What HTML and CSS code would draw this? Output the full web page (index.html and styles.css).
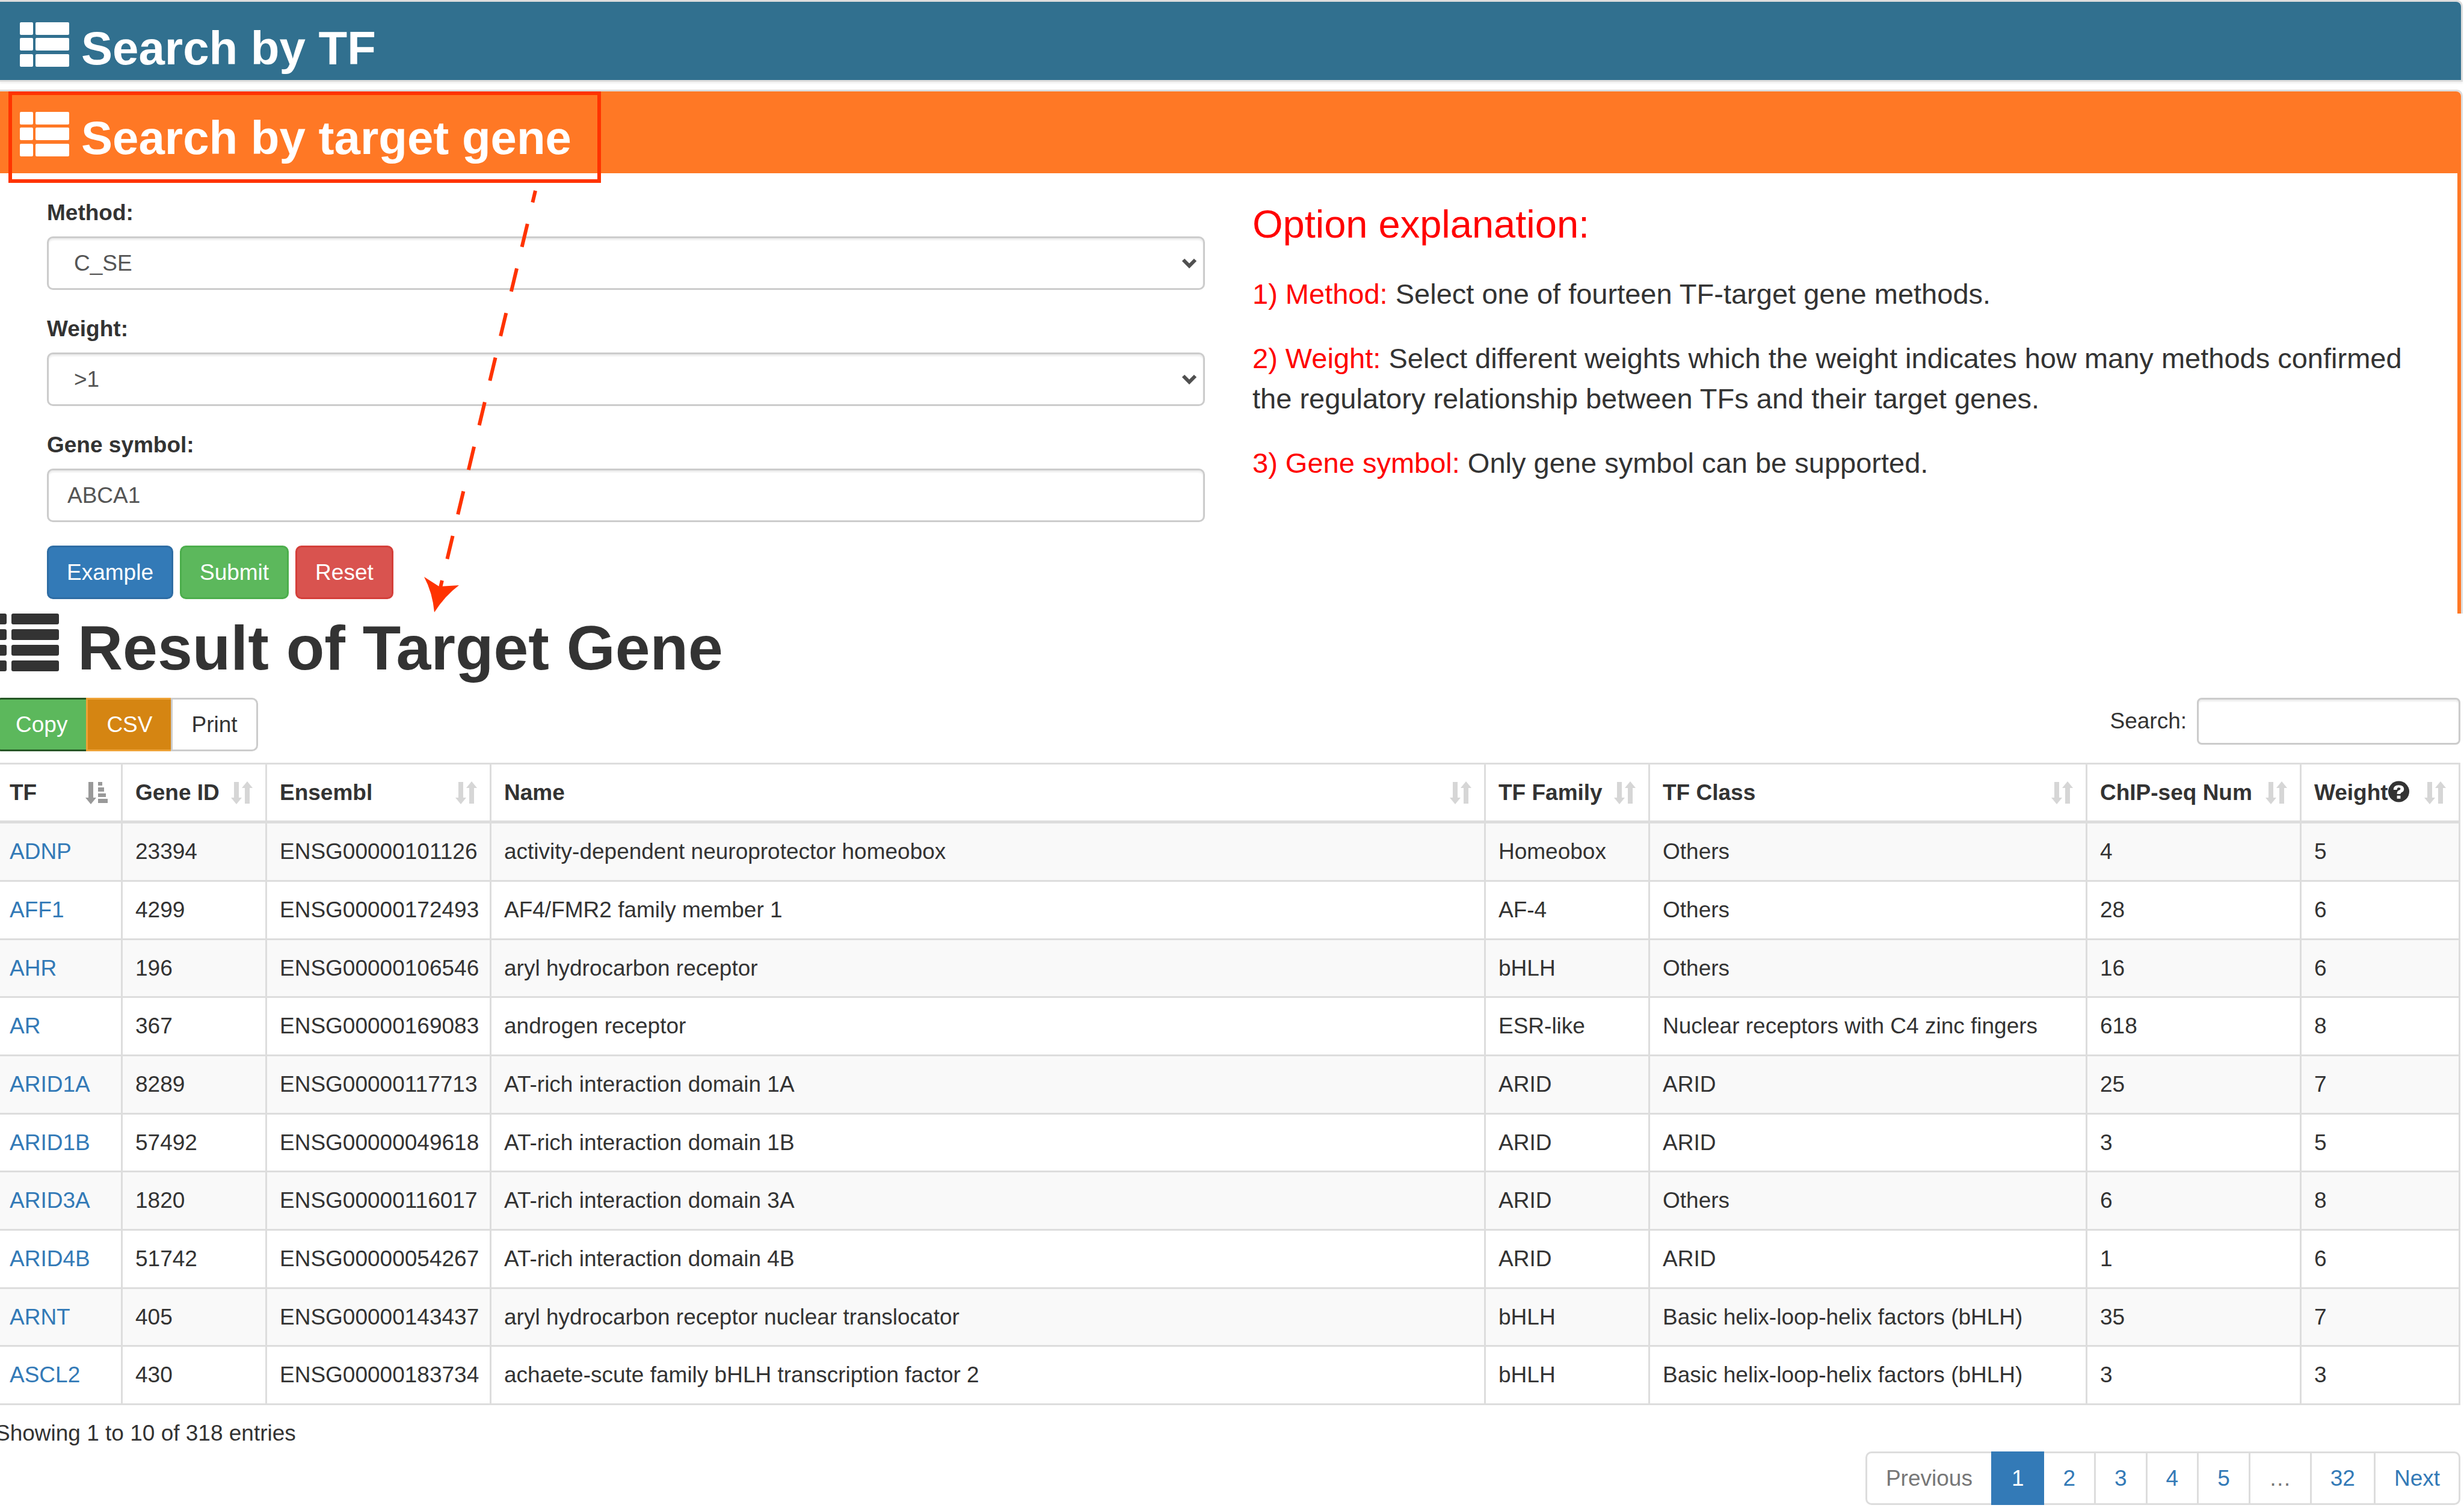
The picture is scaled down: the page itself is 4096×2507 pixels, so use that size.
FILE: index.html
```html
<!DOCTYPE html>
<html lang="en">
<head>
<meta charset="utf-8">
<title>Search by target gene</title>
<link rel="stylesheet" href="styles.css">
</head>
<body>
<svg class="symbols" aria-hidden="true">
  <symbol id="th-list" viewBox="0 0 82 74"><path d="M2 0H20q2 0 2 2V19q0 2-2 2H2q-2 0-2-2V2q0-2 2-2zM28 0H80q2 0 2 2V19q0 2-2 2H28q-2 0-2-2V2q0-2 2-2zM2 26H20q2 0 2 2V45q0 2-2 2H2q-2 0-2-2V28q0-2 2-2zM28 26H80q2 0 2 2V45q0 2-2 2H28q-2 0-2-2V28q0-2 2-2zM2 53H20q2 0 2 2V72q0 2-2 2H2q-2 0-2-2V55q0-2 2-2zM28 53H80q2 0 2 2V72q0 2-2 2H28q-2 0-2-2V55q0-2 2-2z"/></symbol>
  <symbol id="sort" viewBox="0 0 36 40"><path d="M5 2h8v26h5L9 39 0 28h5zM23 38h8V12h5L27 1l-9 11h5z"/></symbol>
  <symbol id="sort-asc" viewBox="0 0 38 40"><path d="M5 2h8v26h5L9 39 0 28h5zM21 2h7v6h-7zM21 11h10v7H21zM21 21h13v6H21zM21 30h16v7H21z"/></symbol>
  <symbol id="chevron" viewBox="0 0 26 18"><path d="M3 3l10 10L23 3" fill="none" stroke="#505050" stroke-width="6"/></symbol>
</svg>

<main class="page">
  <section class="panel">
    <h2 class="panel-title panel-title-blue"><svg class="title-icon"><use href="#th-list"/></svg>Search by TF</h2>
  </section>

  <section class="panel">
    <h2 class="panel-title panel-title-orange"><svg class="title-icon"><use href="#th-list"/></svg>Search by target gene</h2>
    <div class="panel-body">
      <form class="search-form">
        <div class="field">
          <label for="method">Method:</label>
          <div class="select-wrap">
            <select id="method" class="control control-select"><option>C_SE</option></select>
            <svg class="chevron"><use href="#chevron"/></svg>
          </div>
        </div>
        <div class="field">
          <label for="weight">Weight:</label>
          <div class="select-wrap">
            <select id="weight" class="control control-select"><option>&gt;1</option></select>
            <svg class="chevron"><use href="#chevron"/></svg>
          </div>
        </div>
        <div class="field">
          <label for="symbol">Gene symbol:</label>
          <input id="symbol" class="control" type="text" value="ABCA1">
        </div>
        <div class="actions">
          <button type="button" class="btn btn-primary">Example</button>
          <button type="button" class="btn btn-success">Submit</button>
          <button type="button" class="btn btn-danger">Reset</button>
        </div>
      </form>
      <div class="help">
        <h3>Option explanation:</h3>
        <p><span class="term">1) Method:</span> Select one of fourteen TF-target gene methods.</p>
        <p><span class="term">2) Weight:</span> Select different weights which the weight indicates how many methods confirmed the regulatory relationship between TFs and their target genes.</p>
        <p><span class="term">3) Gene symbol:</span> Only gene symbol can be supported.</p>
      </div>
    </div>
  </section>

  <h1 class="result-title">
    <svg class="result-icon" viewBox="0 0 98 96"><path d="M0 0H8q3 0 3 3V15q0 3-3 3H0zM22 0H95q3 0 3 3V15q0 3-3 3H22q-3 0-3-3V3q0-3 3-3zM0 26H8q3 0 3 3V41q0 3-3 3H0zM22 26H95q3 0 3 3V41q0 3-3 3H22q-3 0-3-3V29q0-3 3-3zM0 52H8q3 0 3 3V67q0 3-3 3H0zM22 52H95q3 0 3 3V67q0 3-3 3H22q-3 0-3-3V55q0-3 3-3zM0 78H8q3 0 3 3V93q0 3-3 3H0zM22 78H95q3 0 3 3V93q0 3-3 3H22q-3 0-3-3V81q0-3 3-3z"/></svg>
    Result of Target Gene
  </h1>

  <section class="results">
    <div class="toolbar">
      <div class="btn-group">
        <button type="button" class="btn btn-copy">Copy</button>
        <button type="button" class="btn btn-csv">CSV</button>
        <button type="button" class="btn btn-print">Print</button>
      </div>
      <div class="filter">
        <label for="filter">Search:</label>
        <input id="filter" class="filter-input" type="search">
      </div>
    </div>

    <table class="genes">
      <colgroup><col class="col-tf"><col class="col-id"><col class="col-ensembl"><col><col class="col-family"><col class="col-class"><col class="col-chip"><col class="col-weight"></colgroup>
      <thead>
        <tr>
          <th><div class="head">TF<svg class="sort sort-active"><use href="#sort-asc"/></svg></div></th>
          <th><div class="head">Gene ID<svg class="sort"><use href="#sort"/></svg></div></th>
          <th><div class="head">Ensembl<svg class="sort"><use href="#sort"/></svg></div></th>
          <th><div class="head">Name<svg class="sort"><use href="#sort"/></svg></div></th>
          <th><div class="head">TF Family<svg class="sort"><use href="#sort"/></svg></div></th>
          <th><div class="head">TF Class<svg class="sort"><use href="#sort"/></svg></div></th>
          <th><div class="head">ChIP-seq Num<svg class="sort"><use href="#sort"/></svg></div></th>
          <th><div class="head"><span class="with-hint">Weight<svg class="hint" viewBox="0 0 36 36"><circle cx="18" cy="18" r="18"/><path d="M9 15q0-8 9-8t9 7q0 4-5 6-1 1-1 2h-6q0-5 3-6 3-1 3-3t-3-2-3 4zM15 25h6v5h-6z" fill="#fff"/></svg></span><svg class="sort"><use href="#sort"/></svg></div></th>
        </tr>
      </thead>
      <tbody>
        <tr><td><a href="#">ADNP</a></td><td>23394</td><td>ENSG00000101126</td><td>activity-dependent neuroprotector homeobox</td><td>Homeobox</td><td>Others</td><td>4</td><td>5</td></tr>
        <tr><td><a href="#">AFF1</a></td><td>4299</td><td>ENSG00000172493</td><td>AF4/FMR2 family member 1</td><td>AF-4</td><td>Others</td><td>28</td><td>6</td></tr>
        <tr><td><a href="#">AHR</a></td><td>196</td><td>ENSG00000106546</td><td>aryl hydrocarbon receptor</td><td>bHLH</td><td>Others</td><td>16</td><td>6</td></tr>
        <tr><td><a href="#">AR</a></td><td>367</td><td>ENSG00000169083</td><td>androgen receptor</td><td>ESR-like</td><td>Nuclear receptors with C4 zinc fingers</td><td>618</td><td>8</td></tr>
        <tr><td><a href="#">ARID1A</a></td><td>8289</td><td>ENSG00000117713</td><td>AT-rich interaction domain 1A</td><td>ARID</td><td>ARID</td><td>25</td><td>7</td></tr>
        <tr><td><a href="#">ARID1B</a></td><td>57492</td><td>ENSG00000049618</td><td>AT-rich interaction domain 1B</td><td>ARID</td><td>ARID</td><td>3</td><td>5</td></tr>
        <tr><td><a href="#">ARID3A</a></td><td>1820</td><td>ENSG00000116017</td><td>AT-rich interaction domain 3A</td><td>ARID</td><td>Others</td><td>6</td><td>8</td></tr>
        <tr><td><a href="#">ARID4B</a></td><td>51742</td><td>ENSG00000054267</td><td>AT-rich interaction domain 4B</td><td>ARID</td><td>ARID</td><td>1</td><td>6</td></tr>
        <tr><td><a href="#">ARNT</a></td><td>405</td><td>ENSG00000143437</td><td>aryl hydrocarbon receptor nuclear translocator</td><td>bHLH</td><td>Basic helix-loop-helix factors (bHLH)</td><td>35</td><td>7</td></tr>
        <tr><td><a href="#">ASCL2</a></td><td>430</td><td>ENSG00000183734</td><td>achaete-scute family bHLH transcription factor 2</td><td>bHLH</td><td>Basic helix-loop-helix factors (bHLH)</td><td>3</td><td>3</td></tr>
      </tbody>
    </table>

    <p class="info">Showing 1 to 10 of 318 entries</p>
    <ul class="pagination">
      <li><a class="muted" href="#">Previous</a></li>
      <li><a class="current" href="#">1</a></li>
      <li><a href="#">2</a></li>
      <li><a href="#">3</a></li>
      <li><a href="#">4</a></li>
      <li><a href="#">5</a></li>
      <li><a class="muted" href="#">…</a></li>
      <li><a href="#">32</a></li>
      <li><a href="#">Next</a></li>
    </ul>
  </section>

  <svg class="callout" viewBox="0 0 1010 1030" width="1010" height="1030" aria-hidden="true">
    <rect x="17" y="155" width="979" height="146" fill="none" stroke="#ff3300" stroke-width="6"/>
    <path d="M890 317L732 977" fill="none" stroke="#ff3300" stroke-width="6" stroke-dasharray="39.5 36.7" stroke-dashoffset="19.5"/>
    <path d="M722 1018Q719 985 705 959L730 975 763 973Q740 990 722 1018z" fill="#ff3300"/>
  </svg>
</main>
</body>
</html>
```
FILE: styles.css
```css
* { box-sizing: border-box; }

body {
  margin: 0;
  background: #fff;
  color: #333;
  font-family: "Liberation Sans", Arial, sans-serif;
  font-size: 37px;
  line-height: 52px;
}

h1, h2, h3, p, ul { margin: 0; padding: 0; }

a { color: #337ab7; text-decoration: none; }

input, select, button { font: inherit; }

.symbols { position: absolute; width: 0; height: 0; }

.page { position: relative; overflow: hidden; }

/* Search panels */
.panel {
  margin: 0 2px 13px 0;
  border: 3px solid #ddd;
  border-left: 0;
  border-radius: 0 10px 0 0;
  box-shadow: 0 3px 3px rgba(0, 0, 0, 0.05);
}

.panel + .panel { margin-bottom: 0; border-bottom: 0; box-shadow: none; }

.panel-title {
  display: flex;
  align-items: flex-start;
  gap: 20px;
  padding: 34px 33px 10px;
  border-radius: 0 8px 0 0;
  color: #fff;
  font-size: 78px;
  line-height: 86px;
}

.panel-title-blue { background: #31708f; }
.panel-title-orange { background: #ff7825; }

.title-icon { width: 82px; height: 74px; fill: currentColor; }

.panel-body {
  display: grid;
  grid-template-columns: 1fr 1fr;
  gap: 79px;
  padding: 40px 78px 24px;
  border: 6px solid #ff7825;
  border-left: 0;
  border-bottom: 0;
}

.field { display: flex; flex-direction: column; gap: 13px; margin-bottom: 39px; }

label { font-weight: 700; }

.control {
  display: block;
  width: 100%;
  height: 89px;
  padding: 0 31px;
  border: 3px solid #ccc;
  border-radius: 10px;
  background: #fff;
  color: #555;
  box-shadow: inset 0 3px 3px rgba(0, 0, 0, 0.08);
}

.select-wrap { position: relative; }

.control-select { appearance: none; padding-left: 42px; }

.chevron {
  position: absolute;
  top: 36px;
  right: 13px;
  width: 26px;
  height: 18px;
  pointer-events: none;
}

.actions { display: flex; gap: 11px; }

.btn {
  height: 89px;
  padding: 0 30px;
  border: 3px solid;
  border-radius: 10px;
  color: #fff;
}

.btn-primary { background: #337ab7; border-color: #2e6da4; }
.btn-success { background: #5cb85c; border-color: #4cae4c; }
.btn-danger { background: #d9534f; border-color: #d43f3a; }

.help { padding-top: 9px; font-size: 47px; line-height: 67px; }

.help h3 {
  margin-bottom: 46px;
  color: #f00;
  font-size: 65px;
  font-weight: 400;
  line-height: 72px;
}

.help p + p { margin-top: 40px; }

.term { color: #f00; }

/* Results */
.result-title {
  display: flex;
  align-items: flex-start;
  gap: 31px;
  margin-bottom: 25px;
  font-size: 104px;
  line-height: 115px;
}

.result-icon { width: 98px; height: 96px; fill: currentColor; }

.results { margin: 0 6px 0 -8px; }

.toolbar {
  display: flex;
  justify-content: space-between;
  align-items: flex-start;
  margin-bottom: 19px;
}

.btn-group { display: flex; }
.btn-group .btn { padding: 0 31px; }
.btn-group .btn + .btn { margin-left: -3px; }

.btn-copy { background: #5cb85c; border-color: #255625; border-right-color: #5cb85c; border-radius: 10px 0 0 10px; }
.btn-csv { background: #d58512; border-color: #eea236; border-radius: 0; }
.btn-print { background: #fff; border-color: #ccc; border-radius: 0 10px 10px 0; color: #333; }

.filter { display: flex; align-items: center; gap: 17px; }
.filter label { font-weight: 400; }

.filter-input {
  width: 438px;
  height: 78px;
  padding: 0 26px;
  border: 3px solid #ccc;
  border-radius: 8px;
  background: #fff;
  box-shadow: inset 0 3px 3px rgba(0, 0, 0, 0.08);
}

.genes {
  width: 100%;
  table-layout: fixed;
  border-collapse: collapse;
}

.col-tf { width: 209px; }
.col-id { width: 240px; }
.col-ensembl { width: 373px; }
.col-family { width: 273px; }
.col-class { width: 727px; }
.col-chip { width: 356px; }
.col-weight { width: 264px; }

th, td {
  padding: 21px;
  border: 3px solid #ddd;
  text-align: left;
  white-space: nowrap;
}

th { padding-bottom: 20px; border-bottom-width: 5px; }

tbody tr:nth-child(odd) { background: #f9f9f9; }
tbody tr:nth-child(3n) td { padding-bottom: 20px; }

.head { display: flex; justify-content: space-between; align-items: center; }

.sort { width: 36px; height: 40px; fill: #d6d6d6; }
.sort-active { width: 38px; fill: #999; }

.with-hint { display: flex; align-items: center; }
.hint { width: 35px; height: 36px; margin-bottom: 5px; fill: currentColor; }

.info { padding-top: 21px; }

.pagination {
  display: flex;
  justify-content: flex-end;
  margin: 4px 0 7px;
  list-style: none;
}

.pagination li + li { margin-left: -3px; }

.pagination a {
  display: block;
  padding: 16px 31px 15px;
  border: 3px solid #ddd;
}

.pagination li:first-child a { border-radius: 10px 0 0 10px; }
.pagination li:last-child a { border-radius: 0 10px 10px 0; }
.pagination .muted { color: #777; }
.pagination .current { position: relative; background: #337ab7; border-color: #337ab7; color: #fff; }

/* Callout drawn over the search panel */
.callout { position: absolute; top: 0; left: 0; pointer-events: none; }
```
